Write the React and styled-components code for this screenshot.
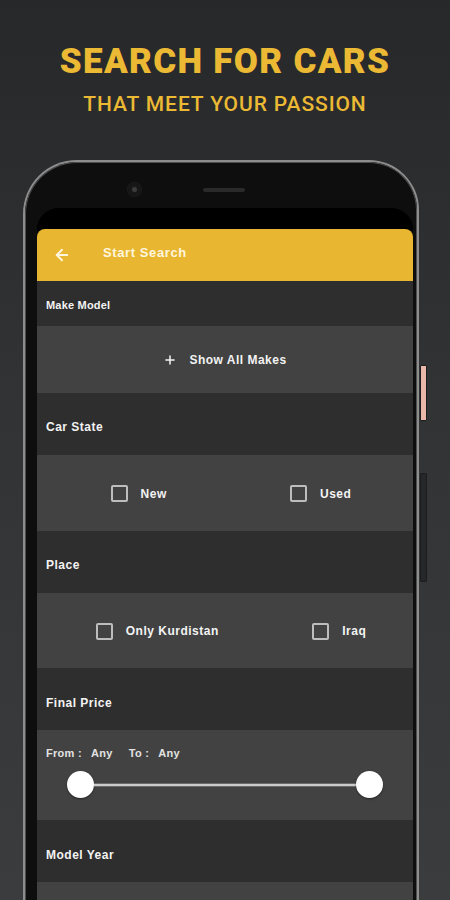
import styled, { createGlobalStyle } from "styled-components";
import { ArrowLeft, Plus } from "lucide-react";

const GlobalStyle = createGlobalStyle`
  html, body {
    margin: 0;
    padding: 0;
    height: 900px;
    overflow: hidden;
  }
  body {
    background: #2a2b2c;
    font-family: "Liberation Sans", Arial, sans-serif;
  }
`;

const Page = styled.div`
  height: 900px;
  overflow: hidden;
  background: linear-gradient(180deg, #27282a 0%, #313335 45%, #3a3c3e 100%);
  display: flex;
  flex-direction: column;
`;

const Hero = styled.header`
  padding-top: 44px;
  display: flex;
  flex-direction: column;
  align-items: center;
  color: #ebb933;
  font-family: Roboto, "Liberation Sans", sans-serif;
`;

const Title = styled.h1`
  margin: 0;
  font-size: 35px;
  line-height: 1;
  font-weight: 900;
  letter-spacing: 1.3px;
`;

const Subtitle = styled.h2`
  margin: 15px 0 0;
  font-size: 21px;
  line-height: 1;
  font-weight: 500;
  letter-spacing: 0.9px;
`;

const PhoneShell = styled.div`
  position: relative;
  margin: 45px 0 0 23px;
  width: 396px;
  box-sizing: border-box;
  flex: 1;
  border: 2px solid #8d8d8d;
  border-bottom: none;
  border-radius: 54px 50px 0 0;
  background: #0c0c0c;
`;

const PhoneBody = styled.div`
  height: 100%;
  box-sizing: border-box;
  border: 1px solid #4e4e4e;
  border-bottom: none;
  border-radius: 52px 48px 0 0;
  padding: 0 3px 0 11px;
  background: #0e0e0e;
`;

const SideButton = styled.span`
  position: absolute;
  right: -10px;
  top: ${(p) => p.$top}px;
  width: 5px;
  height: ${(p) => p.$h}px;
  border-radius: 1px;
  background: ${(p) => p.$color};
  border: 1px solid #1c1c1e;
`;

const TopBezel = styled.div`
  height: 45px;
  box-sizing: border-box;
  padding: 8px 0 0 91px;
  display: flex;
  align-items: center;
  gap: 62px;
`;

const Camera = styled.span`
  width: 13px;
  height: 13px;
  border-radius: 50%;
  background: radial-gradient(circle at 50% 50%, #3b3b3b 0 2px, #181818 3px, #141414 100%);
  box-shadow: 0 0 0 1px #1d1d1d;
`;

const Speaker = styled.span`
  width: 42px;
  height: 4px;
  border-radius: 2px;
  background: #2a2a2a;
`;

const Screen = styled.div`
  border-radius: 22px 22px 0 0;
  background: #000;
  overflow: hidden;
  height: 100%;
`;

const StatusBar = styled.div`
  height: 21px;
  background: #000;
`;

const AppBar = styled.div`
  height: 52px;
  background: #e8b630;
  border-radius: 8px 8px 0 0;
  display: flex;
  align-items: center;
  padding-left: 16px;
  gap: 32px;
  color: #fff6de;
`;

const AppTitle = styled.span`
  font-weight: 700;
  font-size: 13px;
  letter-spacing: 0.6px;
  margin-top: -5px;
`;

const Content = styled.div`
  background: #2e2e2e;
  height: 100%;
`;

const SectionHeader = styled.div`
  height: ${(p) => p.$h}px;
  box-sizing: border-box;
  padding: ${(p) => p.$pt}px 0 0 9px;
  display: flex;
  align-items: center;
  background: #2e2e2e;
  color: #f3f3f3;
  font-weight: 700;
  font-size: ${(p) => p.$size || 12}px;
  letter-spacing: ${(p) => (p.$size ? 0.2 : 0.5)}px;
`;

const Panel = styled.div`
  height: ${(p) => p.$h}px;
  box-sizing: border-box;
  background: #424242;
`;

const ShowAll = styled(Panel)`
  display: flex;
  align-items: center;
  justify-content: center;
  gap: 12px;
  color: #f3f3f3;
  font-weight: 700;
  font-size: 12px;
  letter-spacing: 0.5px;
`;

const OptionRow = styled(Panel)`
  display: flex;
  align-items: center;
  justify-content: space-around;
  padding-left: 12px;
  padding-top: 1px;
`;

const Option = styled.label`
  display: flex;
  align-items: center;
  gap: 13px;
  color: #f3f3f3;
  font-weight: 700;
  font-size: 12px;
  letter-spacing: 0.5px;
`;

const Box = styled.span`
  width: 17px;
  height: 17px;
  box-sizing: border-box;
  border: 2px solid #bdbdbd;
  border-radius: 2px;
`;

const SliderPanel = styled(Panel)`
  padding: 17px 30px 0 9px;
`;

const RangeText = styled.div`
  display: flex;
  align-items: center;
  color: #e2e2e2;
  font-weight: 700;
  font-size: 11px;
  line-height: 13px;
  letter-spacing: 0.3px;
`;

const RangeLabel = styled.span`
  margin-right: ${(p) => p.$gap}px;
`;

const Track = styled.div`
  display: flex;
  align-items: center;
  margin: 11px 0 0 21px;
`;

const Thumb = styled.span`
  width: 27px;
  height: 27px;
  border-radius: 50%;
  background: #fff;
  box-shadow: 0 1px 2px rgba(0, 0, 0, 0.45);
  flex: none;
`;

const Line = styled.span`
  flex: 1;
  height: 2px;
  background: #cbcbcb;
  border-top: 1px solid #6a6a6a;
  border-bottom: 1px solid #6a6a6a;
`;

function Check({ label }) {
  return (
    <Option>
      <Box />
      {label}
    </Option>
  );
}

export default function App() {
  return (
    <Page>
      <GlobalStyle />
      <Hero>
        <Title>SEARCH FOR CARS</Title>
        <Subtitle>THAT MEET YOUR PASSION</Subtitle>
      </Hero>

      <PhoneShell>
        <SideButton $top={203} $h={54} $color="#e9b8aa" />
        <SideButton $top={311} $h={107} $color="#262729" />
        <PhoneBody>
          <TopBezel>
            <Camera />
            <Speaker />
          </TopBezel>
          <Screen>
            <StatusBar />
            <AppBar>
              <ArrowLeft size={18} strokeWidth={2.6} />
              <AppTitle>Start Search</AppTitle>
            </AppBar>
            <Content>
              <SectionHeader $h={45} $pt={3} $size={11}>
                Make Model
              </SectionHeader>
              <ShowAll $h={67}>
                <Plus size={14} strokeWidth={2.6} />
                Show All Makes
              </ShowAll>

              <SectionHeader $h={62} $pt={6}>
                Car State
              </SectionHeader>
              <OptionRow $h={76}>
                <Check label="New" />
                <Check label="Used" />
              </OptionRow>

              <SectionHeader $h={62} $pt={6}>
                Place
              </SectionHeader>
              <OptionRow $h={75}>
                <Check label="Only Kurdistan" />
                <Check label="Iraq" />
              </OptionRow>

              <SectionHeader $h={62} $pt={8}>
                Final Price
              </SectionHeader>
              <SliderPanel $h={90}>
                <RangeText>
                  <RangeLabel $gap={9}>From :</RangeLabel>
                  <RangeLabel $gap={16}>Any</RangeLabel>
                  <RangeLabel $gap={9}>To :</RangeLabel>
                  <RangeLabel $gap={0}>Any</RangeLabel>
                </RangeText>
                <Track>
                  <Thumb />
                  <Line />
                  <Thumb />
                </Track>
              </SliderPanel>

              <SectionHeader $h={62} $pt={8}>
                Model Year
              </SectionHeader>
              <Panel $h={60} />
            </Content>
          </Screen>
        </PhoneBody>
      </PhoneShell>
    </Page>
  );
}
